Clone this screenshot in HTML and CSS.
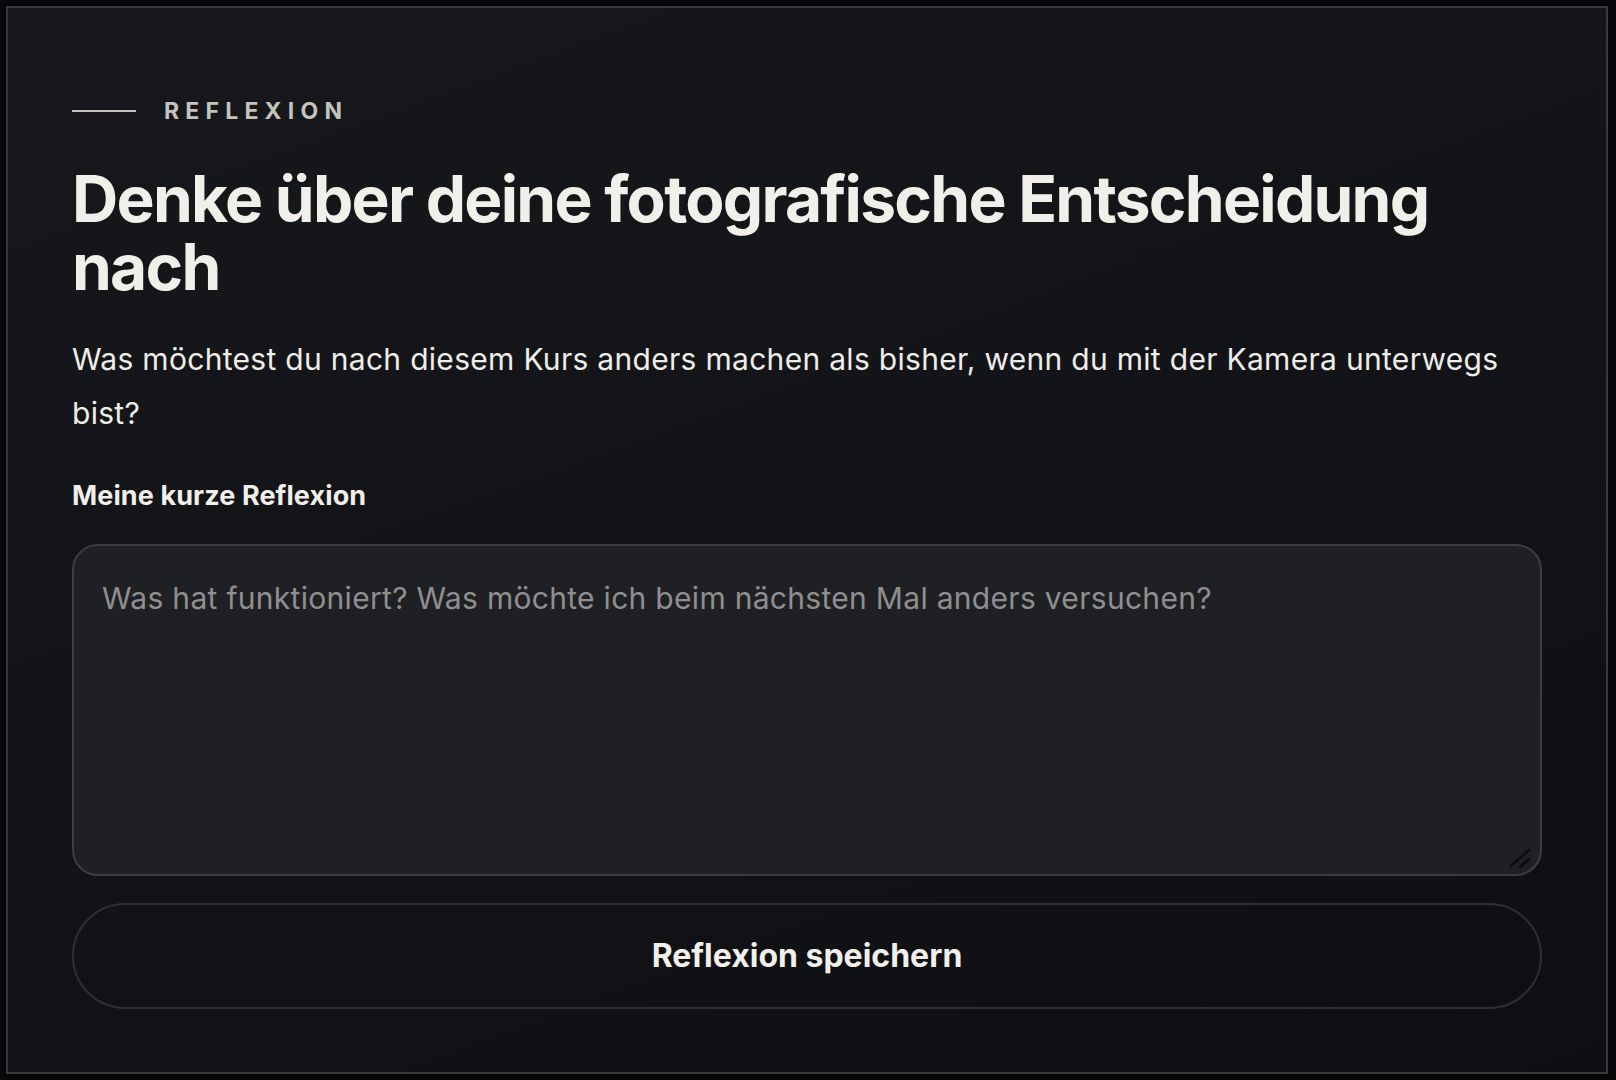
FILE: index.html
```html
<!DOCTYPE html>
<html lang="de">
<head>
<meta charset="utf-8">
<title>Reflexion</title>
<link rel="stylesheet" href="styles.css">
</head>
<body>
<div class="frame">
  <section class="card">
    <div class="eyebrow">
      <span class="eyebrow-line"></span>
      <span class="eyebrow-text">REFLEXION</span>
    </div>
    <h1 class="title">Denke über deine fotografische Entscheidung nach</h1>
    <p class="lead">Was möchtest du nach diesem Kurs anders machen als bisher, wenn du mit der Kamera unterwegs bist?</p>
    <label class="field-label" for="reflexion">Meine kurze Reflexion</label>
    <div class="field-wrap">
      <textarea id="reflexion" class="field" placeholder="Was hat funktioniert? Was möchte ich beim nächsten Mal anders versuchen?"></textarea>
      <svg class="grip" viewBox="0 0 22 22" width="22" height="22" aria-hidden="true">
        <line x1="2" y1="19" x2="20" y2="3" stroke="#0b0c0f" stroke-width="2.4" stroke-linecap="round"/>
        <line x1="11" y1="20" x2="20" y2="12" stroke="#0b0c0f" stroke-width="2.4" stroke-linecap="round"/>
      </svg>
    </div>
    <button class="save" type="button">Reflexion speichern</button>
  </section>
</div>
</body>
</html>
```

FILE: styles.css
```css
* { box-sizing: border-box; }

html, body {
  margin: 0;
  padding: 0;
  background: #07080a;
  font-family: Inter, "Noto Sans", "Liberation Sans", sans-serif;
}

.frame {
  height: 100vh;
  padding: 6px 8px 6px 6px;
}

.card {
  height: 100%;
  overflow: hidden;
  border: 2px solid #38393d;
  background: linear-gradient(160deg, #17181b 0%, #131418 45%, #0e0f12 100%);
  padding: 89px 64px 40px;
  display: flex;
  flex-direction: column;
}

.card > * { flex-shrink: 0; }

.eyebrow {
  display: flex;
  align-items: center;
  gap: 28px;
  height: 28px;
}

.eyebrow-line {
  width: 64px;
  height: 2px;
  background: #c4c3be;
}

.eyebrow-text {
  font-size: 23px;
  font-weight: 700;
  letter-spacing: 0.27em;
  color: #c4c3be;
  line-height: 28px;
}

.title {
  margin: 40px 0 0;
  font-size: 64px;
  line-height: 1.07;
  font-weight: 700;
  letter-spacing: -0.027em;
  color: #f0efe9;
}

.lead {
  margin: 30px 0 0;
  font-size: 30px;
  line-height: 54px;
  letter-spacing: 0.3px;
  color: #eeede8;
  font-weight: 400;
}

.field-label {
  display: block;
  margin-top: 38px;
  font-size: 27px;
  line-height: 35px;
  font-weight: 700;
  letter-spacing: 0.1px;
  color: #f0efe9;
}

.field-wrap {
  position: relative;
  margin-top: 31px;
}

.field {
  display: block;
  width: 100%;
  height: 332px;
  border: 2px solid #3d3e43;
  border-radius: 26px;
  background: #1f2024;
  color: #eeede8;
  padding: 28px 28px;
  font-family: inherit;
  font-size: 30px;
  line-height: 48px;
  letter-spacing: 0.3px;
  resize: none;
  outline: none;
}

.field::placeholder {
  color: #8f8f90;
}

.grip {
  position: absolute;
  right: 11px;
  bottom: 7px;
  pointer-events: none;
}

.save {
  margin-top: 27px;
  width: 100%;
  height: 106px;
  border: 2px solid #2e2f33;
  border-radius: 999px;
  background: transparent;
  color: #f0efe9;
  font-family: inherit;
  font-size: 32px;
  font-weight: 700;
  cursor: pointer;
}
```
